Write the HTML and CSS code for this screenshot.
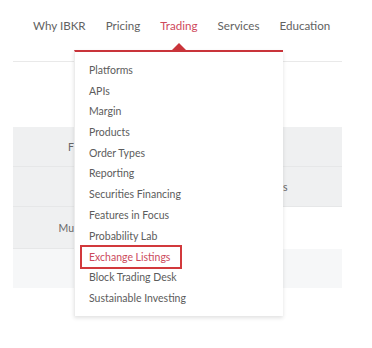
FILE: index.html
```html
<!DOCTYPE html>
<html>
<head>
  <title>Trading</title>
  <link rel="stylesheet" href="styles.css">
</head>
<body>

<div class="page">
  <nav class="topnav">
    <a class="nav-item">Why IBKR</a>
    <a class="nav-item">Pricing</a>
    <a class="nav-item active">Trading</a>
    <a class="nav-item">Services</a>
    <a class="nav-item">Education</a>
  </nav>

  <div class="rule"></div>

  <div class="grid">
    <div class="cell gray first">F</div>
    <div class="cell gray"></div>
    <div class="cell gray"></div>
    <div class="cell gray"></div>
    <div class="cell gray"></div>
    <div class="cell gray right">s</div>
    <div class="cell gray third">Mu</div>
    <div class="cell gray"></div>
    <div class="cell"></div>
    <div class="cell light full"></div>
  </div>

  <div class="dropdown">
    <ul class="menu">
      <li>Platforms</li>
      <li>APIs</li>
      <li>Margin</li>
      <li>Products</li>
      <li>Order Types</li>
      <li>Reporting</li>
      <li>Securities Financing</li>
      <li>Features in Focus</li>
      <li>Probability Lab</li>
      <li class="selected"><span>Exchange Listings</span></li>
      <li>Block Trading Desk</li>
      <li>Sustainable Investing</li>
    </ul>
  </div>
</div>

</body>
</html>
```

FILE: styles.css
```css
body { margin: 0; background: #fff; font-family: Lato, "Noto Sans", sans-serif; color: #555; }
.page { position: relative; width: 372px; height: 348px; overflow: hidden; }

.topnav { display: flex; gap: 20px; padding: 16px 0 0 33px; height: 20px; }
.nav-item { font-size: 11.6px; color: #626262; line-height: 20px; }
.nav-item.active { color: #cf4a5c; }

.rule { margin: 25px 30px 0 13px; height: 1px; background: #e9e9e9; }

.grid { display: grid; grid-template-columns: 61px 209px 59px; grid-auto-rows: 40px; margin: 65px 0 0 13px; width: 329px; }
.cell { font-size: 10.5px; color: #666; display: flex; align-items: center; white-space: nowrap; }
.gray { background: #eff0f1; border-bottom: 1px solid #e6e7e8; }
.first { justify-content: flex-end; padding-right: 0; }
.third { justify-content: flex-end; height: 41px; }
.right { padding-left: 0; }
.light { background: #f6f7f8; }
.full { grid-column: 1 / 4; margin-top: 2px; height: 39px; }

.dropdown { position: absolute; left: 74px; top: 50px; width: 209px; background: #fff; border-top: 2px solid #c9343a; box-shadow: 0 2px 4px rgba(0,0,0,0.12); border-left: 1px solid #ececec; box-sizing: border-box; }
.dropdown::before { content: ""; position: absolute; top: -9px; left: 97px; border-left: 7px solid transparent; border-right: 7px solid transparent; border-bottom: 7px solid #c9343a; }
.menu { list-style: none; margin: 0; padding: 8px 0 8px; }
.menu li { height: 20.7px; line-height: 20.7px; padding-left: 14px; font-size: 10.5px; color: #5c5c5c; white-space: nowrap; }
.menu li.selected span { display: inline-block; vertical-align: middle; margin: -2px 0 0 -9px; padding: 0 10px 0 7px; border: 2px solid #d2393c; line-height: 20px; color: #cc4a5c; }
```
